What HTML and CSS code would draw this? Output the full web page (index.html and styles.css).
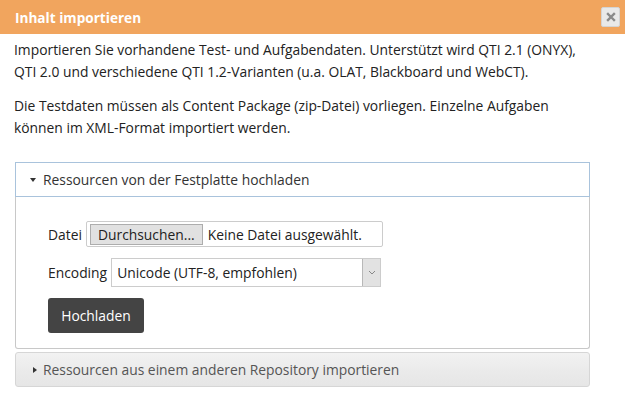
FILE: index.html
```html
<!DOCTYPE html>
<html lang="de">
<head>
<meta charset="utf-8">
<link rel="stylesheet" href="styles.css">
</head>
<body>
<div class="dialog">
  <div class="dlg-head">
    <span class="dlg-title">Inhalt importieren</span>
    <span class="dlg-close"><svg width="10" height="10" viewBox="0 0 10 10"><path d="M2 2L8 8M8 2L2 8" stroke="#8a8a8a" stroke-width="2.4" stroke-linecap="square"/></svg></span>
  </div>
  <div class="dlg-body">
    <p class="intro">Importieren Sie vorhandene Test- und Aufgabendaten. Unterstützt wird QTI 2.1 (ONYX),<br>QTI 2.0 und verschiedene QTI 1.2-Varianten (u.a. OLAT, Blackboard und WebCT).</p>
    <p class="intro">Die Testdaten müssen als Content Package (zip-Datei) vorliegen. Einzelne Aufgaben<br>können im XML-Format importiert werden.</p>

    <div class="panel open">
      <div class="panel-head"><span class="tri-down"></span>Ressourcen von der Festplatte hochladen</div>
      <div class="panel-body">
        <div class="row">
          <span class="lbl">Datei</span>
          <span class="file"><span class="file-btn">Durchsuchen...</span><span class="file-txt">Keine Datei ausgewählt.</span></span>
        </div>
        <div class="row">
          <span class="lbl">Encoding</span>
          <span class="select"><span class="sel-txt">Unicode (UTF-8, empfohlen)</span><span class="sel-arrow"><svg width="8" height="5" viewBox="0 0 8 5"><path d="M1 1L4 4L7 1" fill="none" stroke="#888" stroke-width="1"/></svg></span></span>
        </div>
        <button class="upload">Hochladen</button>
      </div>
    </div>
    <div class="panel closed">
      <div class="panel-head"><span class="tri-right"></span>Ressourcen aus einem anderen Repository importieren</div>
    </div>
  </div>
</div>
</body>
</html>
```
FILE: styles.css
```css
html, body { margin: 0; padding: 0; background: #fff; }
body {
  font-family: "Open Sans", "DejaVu Sans", sans-serif;
  font-size: 13.85px;
  color: #222;
}
.dialog { width: 625px; }
.dlg-head {
  height: 34px;
  background: #f1a55e;
  display: flex;
  align-items: center;
  justify-content: space-between;
  padding: 0 5px 0 15px;
}
.dlg-title { color: #fff; font-weight: bold; font-size: 13.6px; }
.dlg-close {
  width: 17px; height: 18px;
  background: #e9e9e9;
  border: 1px solid #d4d4d4;
  border-radius: 2px;
  display: flex; align-items: center; justify-content: center;
}
.dlg-body { padding: 5px 35px 0 14px; }
.intro { margin: 0 0 12px; line-height: 22px; white-space: nowrap; }
.panel { margin-left: 1px; }
.panel.open { margin-top: 23px; }
.panel.open .panel-head {
  height: 33px;
  border: 1px solid #a9c3dc;
  display: flex; align-items: center;
  padding-left: 14px;
  color: #333;
}
.tri-down {
  width: 0; height: 0;
  border-left: 3px solid transparent;
  border-right: 3px solid transparent;
  border-top: 4px solid #333;
  margin-right: 7px;
}
.tri-right {
  width: 0; height: 0;
  border-top: 3px solid transparent;
  border-bottom: 3px solid transparent;
  border-left: 4px solid #333;
  margin-right: 6px;
}
.panel-body {
  border: 1px solid #c8c8c8;
  border-top: 0;
  border-radius: 0 0 3px 3px;
  padding: 24px 0 15px 32px;
}
.row { display: flex; align-items: center; margin-bottom: 11px; }
.lbl { margin-right: 4px; }
.file {
  width: 297px; height: 26px;
  border: 1px solid #ccc;
  border-radius: 2px;
  display: flex; align-items: center;
  box-sizing: border-box;
  padding-left: 3px;
}
.file-btn {
  background: #e1e1e1;
  border: 1px solid #adadad;
  padding: 0 7px;
  height: 19px; line-height: 19px;
  margin-right: 5px;
}
.select {
  width: 270px; height: 29px;
  border: 1px solid #ccc;
  box-sizing: border-box;
  display: flex; align-items: stretch;
}
.sel-txt { flex: 1; display: flex; align-items: center; padding-left: 5px; }
.sel-arrow {
  width: 17px;
  background: #e2e2e2;
  border-left: 1px solid #b8b8b8;
  display: flex; align-items: center; justify-content: center;
}
.upload {
  display: block;
  font: inherit;
  background: #444;
  color: #fff;
  border: 0;
  border-radius: 3px;
  width: 96px; height: 35px;
  padding: 0;
}
.panel.closed {
  margin-top: 3px;
}
.panel.closed .panel-head {
  height: 33px;
  border: 1px solid #d6d6d6;
  border-radius: 3px;
  background: linear-gradient(#f2f2f2, #ebebeb 50%, #e6e6e6);
  display: flex; align-items: center;
  padding-left: 17px;
  color: #555;
}
```
